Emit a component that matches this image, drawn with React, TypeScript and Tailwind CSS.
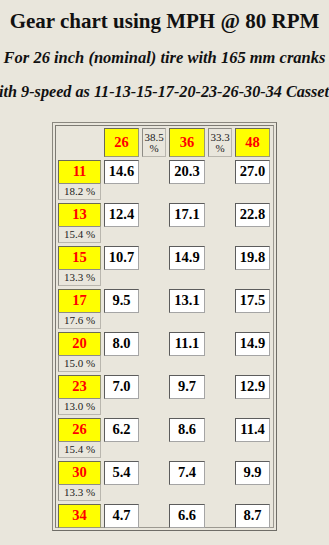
import * as React from 'react';

const cogs = [
  { cog: '11', mph: ['14.6', '20.3', '27.0'], step: '18.2 %' },
  { cog: '13', mph: ['12.4', '17.1', '22.8'], step: '15.4 %' },
  { cog: '15', mph: ['10.7', '14.9', '19.8'], step: '13.3 %' },
  { cog: '17', mph: ['9.5', '13.1', '17.5'], step: '17.6 %' },
  { cog: '20', mph: ['8.0', '11.1', '14.9'], step: '15.0 %' },
  { cog: '23', mph: ['7.0', '9.7', '12.9'], step: '13.0 %' },
  { cog: '26', mph: ['6.2', '8.6', '11.4'], step: '15.4 %' },
  { cog: '30', mph: ['5.4', '7.4', '9.9'], step: '13.3 %' },
  { cog: '34', mph: ['4.7', '6.6', '8.7'], step: '' },
];

function Gear({ children }: { children: React.ReactNode }) {
  return (
    <div className="flex items-center justify-center bg-[#ffff00] border border-t-[#6b6a55] border-l-[#6b6a55] border-b-[#9a9a70] border-r-[#9a9a70] text-[14.5px] font-bold text-[#ff0000]">
      {children}
    </div>
  );
}

function Speed({ children }: { children: React.ReactNode }) {
  return (
    <div className="flex items-center justify-center bg-white border border-t-[#5c5c5c] border-l-[#5c5c5c] border-b-[#a5a5a5] border-r-[#a5a5a5] text-[14.5px] font-bold text-black">
      {children}
    </div>
  );
}

function Step({ children }: { children: React.ReactNode }) {
  return (
    <div className="flex items-center justify-center text-center border border-t-[#8e8c86] border-l-[#8e8c86] border-b-[#b9b6ae] border-r-[#b9b6ae] text-[11px] leading-[11px] text-[#222]">
      {children}
    </div>
  );
}

export default function App() {
  return (
    <div className="min-h-[545px] overflow-hidden bg-[#e9e6dc] font-['Liberation_Serif',serif] text-[#111]">
      <h1 className="pt-[8px] text-center text-[21px] leading-[26px] font-bold">
        Gear chart using MPH @ 80 RPM
      </h1>
      <h3 className="mt-[14px] text-center text-[16.5px] leading-[20px] font-bold italic">
        For 26 inch (nominal) tire with 165 mm cranks
      </h3>
      <div className="mt-[14px] flex justify-center whitespace-nowrap text-[16.2px] leading-[20px] font-bold italic">
        with 9-speed as 11-13-15-17-20-23-26-30-34 Cassette
      </div>

      <div className="mt-[20px] flex justify-center">
        <div className="border border-t-[#8a877f] border-l-[#8a877f] border-b-[#6f6d67] border-r-[#6f6d67] p-[2px]">
          <div className="border border-t-[#7d7a73] border-l-[#7d7a73] border-b-[#9c9991] border-r-[#9c9991] pt-[2px] pb-[3px] pl-[2px] pr-[3px]">
            <div className="grid grid-cols-[43px_35px_24px_36px_24px_35px] gap-[3px]">
              <div className="h-[29px]" />
              <Gear>26</Gear>
              <Step>38.5<br />%</Step>
              <Gear>36</Gear>
              <Step>33.3<br />%</Step>
              <Gear>48</Gear>

              {cogs.map((r) => (
                <React.Fragment key={r.cog}>
                  <div className="col-span-6 grid h-[20px] grid-cols-[43px_35px_24px_36px_24px_35px] gap-[3px]">
                    <Gear>{r.cog}</Gear>
                    <Speed>{r.mph[0]}</Speed>
                    <div />
                    <Speed>{r.mph[1]}</Speed>
                    <div />
                    <Speed>{r.mph[2]}</Speed>
                  </div>
                  {r.step && (
                    <div className="col-span-6 grid h-[17px] grid-cols-[43px_35px_24px_36px_24px_35px] gap-[3px]">
                      <Step>{r.step}</Step>
                    </div>
                  )}
                </React.Fragment>
              ))}
            </div>
          </div>
        </div>
      </div>
    </div>
  );
}
